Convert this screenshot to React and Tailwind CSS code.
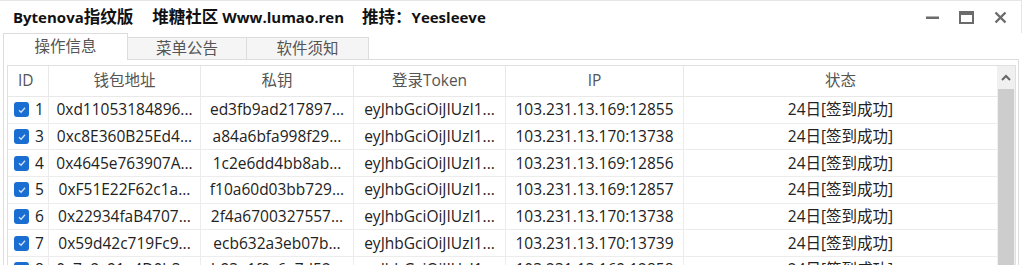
import React from "react";

const rows = [
  ["1", "0xd11053184896...", "ed3fb9ad217897...", "eyJhbGciOiJIUzI1...", "103.231.13.169:12855", "24日[签到成功]"],
  ["3", "0xc8E360B25Ed4...", "a84a6bfa998f29...", "eyJhbGciOiJIUzI1...", "103.231.13.170:13738", "24日[签到成功]"],
  ["4", "0x4645e763907A...", "1c2e6dd4bb8ab...", "eyJhbGciOiJIUzI1...", "103.231.13.169:12856", "24日[签到成功]"],
  ["5", "0xF51E22F62c1a...", "f10a60d03bb729...", "eyJhbGciOiJIUzI1...", "103.231.13.169:12857", "24日[签到成功]"],
  ["6", "0x22934faB4707...", "2f4a6700327557...", "eyJhbGciOiJIUzI1...", "103.231.13.170:13738", "24日[签到成功]"],
  ["7", "0x59d42c719Fc9...", "ecb632a3eb07b...", "eyJhbGciOiJIUzI1...", "103.231.13.170:13739", "24日[签到成功]"],
  ["8", "0x7a2c91e4D0b3...", "b93e1f0c6a7d52...", "eyJhbGciOiJIUzI1...", "103.231.13.169:12858", "24日[签到成功]"],
];

const grid = "grid grid-cols-[41px_152px_153px_152px_178px_1fr]";

function Check() {
  return (
    <span className="w-[15px] h-[15px] rounded-[3px] bg-[#1a6dd1] flex items-center justify-center shrink-0">
      <svg width="10" height="10" viewBox="0 0 10 10">
        <path d="M2 5.2 L4.1 7.2 L8 2.8" fill="none" stroke="#cfe0f7" strokeWidth="1.3" />
      </svg>
    </span>
  );
}

export default function App() {
  return (
    <div
      className="w-[1024px] h-[265px] overflow-hidden bg-white text-[#222]"
      style={{ fontFamily: '"Open Sans", "Noto Sans CJK SC", sans-serif' }}
    >
      <div className="w-[1022px] h-[33px] border-t border-r border-[#e6e6e6] flex items-center pl-[13px] pr-[14px]">
        <div className="flex items-center text-[15px] font-bold text-[#111] whitespace-nowrap">
          <span>Bytenova</span>
          <span className="text-[16.5px]">指纹版</span>
          <span className="ml-[19px] text-[16.5px]">堆糖社区</span>
          <span className="ml-[4px]">Www.lumao.ren</span>
          <span className="ml-[18px] text-[16.5px]">推持：</span>
          <span>Yeesleeve</span>
        </div>
        <div className="ml-auto flex items-center gap-[20px] text-[#666]">
          <svg width="13" height="13" viewBox="0 0 13 13">
            <rect x="0" y="5.5" width="13" height="2.5" fill="#6b6b6b" />
          </svg>
          <svg width="15" height="13" viewBox="0 0 15 13">
            <rect x="1" y="1" width="13" height="11" fill="none" stroke="#6b6b6b" strokeWidth="2" />
            <rect x="1" y="1" width="13" height="3" fill="#6b6b6b" />
          </svg>
          <svg width="13" height="13" viewBox="0 0 13 13">
            <path d="M1.5 1.5 L11.5 11.5 M11.5 1.5 L1.5 11.5" stroke="#6b6b6b" strokeWidth="2.4" />
          </svg>
        </div>
      </div>

      <div className="flex items-end h-[27px] pl-[3px] relative z-10">
        <div className="w-[125px] h-[27px] border border-b-0 border-[#dcdcdc] bg-white flex items-center justify-center text-[15.5px] text-[#555]">
          操作信息
        </div>
        <div className="w-[119px] h-[23px] border border-l-0 border-[#dcdcdc] bg-[#f5f5f5] flex items-center justify-center text-[15.5px] text-[#555]">
          菜单公告
        </div>
        <div className="w-[122px] h-[23px] border border-l-0 border-[#dcdcdc] bg-[#f5f5f5] flex items-center justify-center text-[15.5px] text-[#555]">
          软件须知
        </div>
      </div>

      <div className="ml-[3px] w-[1016px] -mt-px border border-[#dcdcdc] pt-[5px] pl-[3px] h-[220px]">
        <div className="w-[1009px] border border-[#e0e0e0] flex">
          <div className="flex-1 text-[15.5px]">
            <div className={`${grid} h-[31px] text-[#555] border-b border-[#e8e8e8]`}>
              {["ID", "钱包地址", "私钥", "登录Token", "IP", "状态"].map((h, i) => (
                <div
                  key={h}
                  className={`flex items-center ${i === 0 ? "justify-start pl-[10px]" : "justify-center"} ${i < 5 ? "border-r border-[#e8e8e8]" : ""}`}
                >
                  {h}
                </div>
              ))}
            </div>
            {rows.map((r) => (
              <div key={r[0]} className={`${grid} h-[26.7px] border-b border-[#ececec]`}>
                <div className="flex items-center pl-[6px] gap-[6px] border-r border-[#ececec]">
                  <Check />
                  <span>{r[0]}</span>
                </div>
                {r.slice(1).map((c, i) => (
                  <div
                    key={i}
                    className={`flex items-center justify-center whitespace-nowrap overflow-hidden ${i < 4 ? "border-r border-[#ececec]" : ""}`}
                  >
                    {c}
                  </div>
                ))}
              </div>
            ))}
          </div>
          <div className="w-[18px] flex flex-col bg-[#f0f0f0]">
            <div className="h-[23px] flex items-center justify-center">
              <svg width="10" height="7" viewBox="0 0 10 7">
                <path d="M1 6 L5 2 L9 6" fill="none" stroke="#666" strokeWidth="2" />
              </svg>
            </div>
            <div className="flex-1 bg-[#cdcdcd] mx-px" />
          </div>
        </div>
      </div>
    </div>
  );
}
